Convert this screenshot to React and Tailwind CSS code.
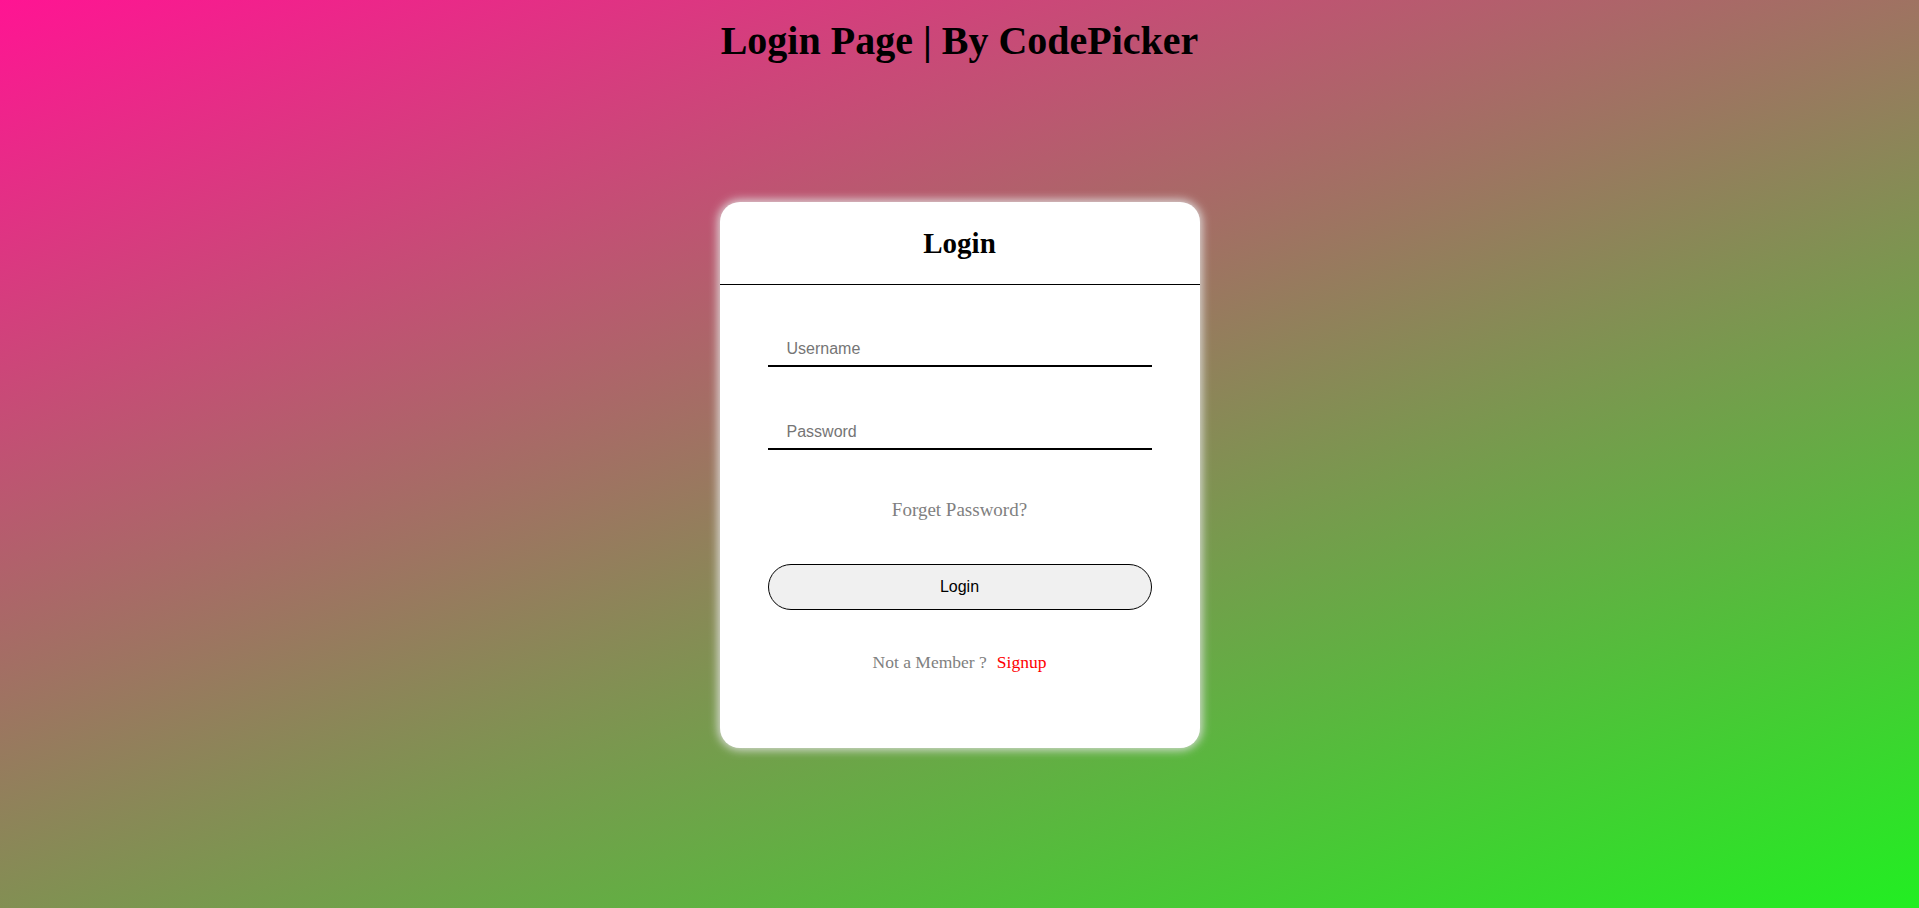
const App = () => (
    <div className="min-h-screen w-full bg-[linear-gradient(160deg,#ff1493,#22ee22)] overflow-hidden font-['Liberation_Serif',serif]">
        {/* Page title */}
        <h1 className="pt-[18px] text-center text-[40px] leading-[46px] font-bold text-black">
            Login Page | By CodePicker
        </h1>

        {/* Card */}
        <div className="mx-auto mt-[138px] w-[480px] bg-white rounded-[20px] shadow-[0_0_10px_2px_rgba(225,225,225,0.95)] pb-[76px]">
            <div className="pt-[25px] pb-[25px] border-b border-black text-center">
                <h2 className="text-[29px] leading-[32px] font-bold text-black">Login</h2>
            </div>

            <form className="flex flex-col items-center" onSubmit={(e) => e.preventDefault()}>
                <input
                    type="text"
                    placeholder="Username"
                    className="mt-[48px] w-[384px] h-[34px] pl-[19px] bg-transparent border-0 border-b-2 border-black outline-none font-['Liberation_Sans',sans-serif] text-[16px] text-black placeholder:text-[#757575]"
                />
                <input
                    type="password"
                    placeholder="Password"
                    className="mt-[49px] w-[384px] h-[34px] pl-[19px] bg-transparent border-0 border-b-2 border-black outline-none font-['Liberation_Sans',sans-serif] text-[16px] text-black placeholder:text-[#757575]"
                />

                <p className="mt-[50px] text-[19px] leading-[20px] text-[#808080]">Forget Password?</p>

                <button
                    type="submit"
                    className="mt-[44px] w-[384px] h-[46px] rounded-full border border-black bg-[#f0f0f0] font-['Liberation_Sans',sans-serif] text-[16px] text-black"
                >
                    Login
                </button>

                <p className="mt-[42px] text-[17.5px] leading-[20px] text-[#808080]">
                    Not a Member ?<a href="#" className="ml-[10px] text-[#ff0000]">Signup</a>
                </p>
            </form>
        </div>
    </div>
);

export default App;
